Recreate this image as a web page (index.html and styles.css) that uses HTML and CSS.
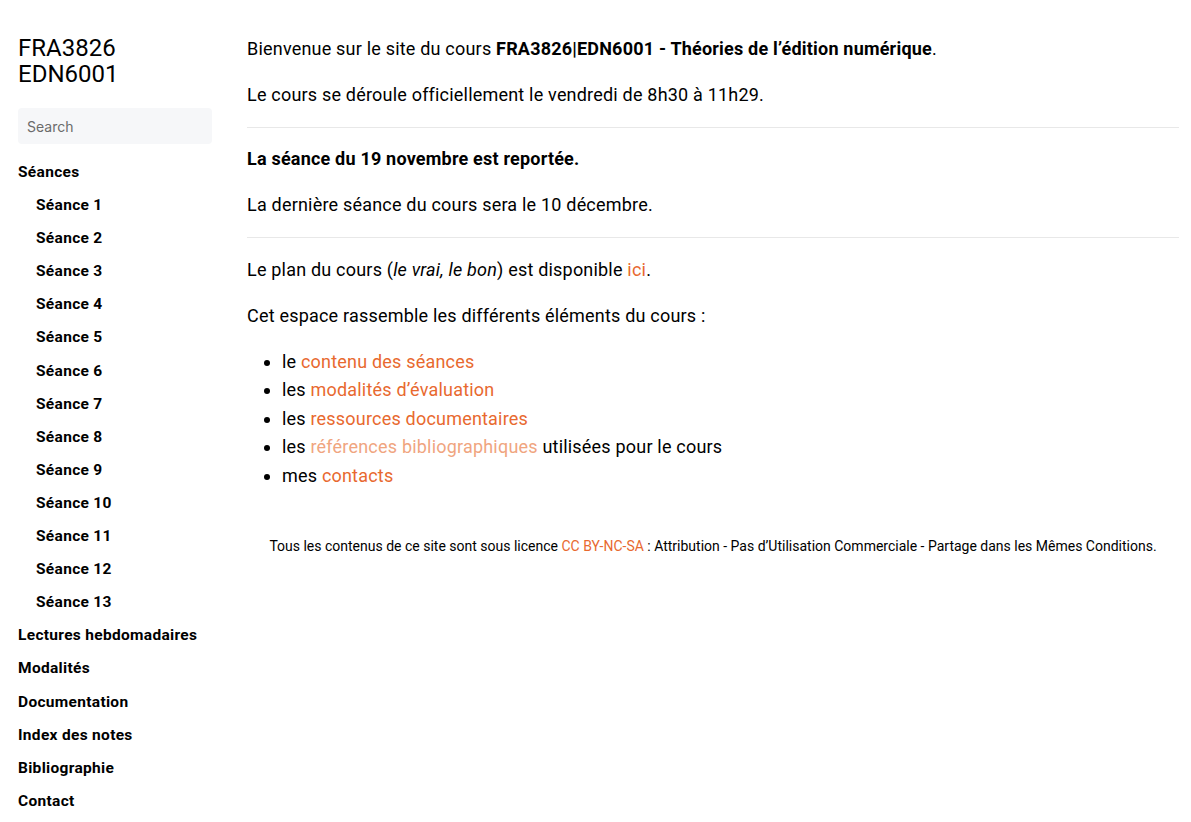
FILE: index.html
```html
<!DOCTYPE html>
<html lang="fr">
<head>
<meta charset="utf-8">
<title>FRA3826 EDN6001</title>
<link rel="stylesheet" href="styles.css">
</head>
<body>
<div class="layout">
  <aside class="sidebar">
    <h1 class="site-title">FRA3826<br>EDN6001</h1>
    <input class="search" type="text" placeholder="Search">
    <nav>
      <ul class="nav">
        <li><a href="#">Séances</a>
          <ul class="subnav">
            <li><a href="#">Séance 1</a></li>
            <li><a href="#">Séance 2</a></li>
            <li><a href="#">Séance 3</a></li>
            <li><a href="#">Séance 4</a></li>
            <li><a href="#">Séance 5</a></li>
            <li><a href="#">Séance 6</a></li>
            <li><a href="#">Séance 7</a></li>
            <li><a href="#">Séance 8</a></li>
            <li><a href="#">Séance 9</a></li>
            <li><a href="#">Séance 10</a></li>
            <li><a href="#">Séance 11</a></li>
            <li><a href="#">Séance 12</a></li>
            <li><a href="#">Séance 13</a></li>
          </ul>
        </li>
        <li><a href="#">Lectures hebdomadaires</a></li>
        <li><a href="#">Modalités</a></li>
        <li><a href="#">Documentation</a></li>
        <li><a href="#">Index des notes</a></li>
        <li><a href="#">Bibliographie</a></li>
        <li><a href="#">Contact</a></li>
      </ul>
    </nav>
  </aside>
  <main class="content">
    <p>Bienvenue sur le site du cours <strong>FRA3826|EDN6001 - Théories de l’édition numérique</strong>.</p>
    <p>Le cours se déroule officiellement le vendredi de 8h30 à 11h29.</p>
    <hr>
    <p><strong>La séance du 19 novembre est reportée.</strong></p>
    <p>La dernière séance du cours sera le 10 décembre.</p>
    <hr>
    <p>Le plan du cours (<em>le vrai, le bon</em>) est disponible <a class="link" href="#">ici</a>.</p>
    <p>Cet espace rassemble les différents éléments du cours :</p>
    <ul class="list">
      <li>le <a class="link" href="#">contenu des séances</a></li>
      <li>les <a class="link" href="#">modalités d’évaluation</a></li>
      <li>les <a class="link" href="#">ressources documentaires</a></li>
      <li>les <a class="link light" href="#">références bibliographiques</a> utilisées pour le cours</li>
      <li>mes <a class="link" href="#">contacts</a></li>
    </ul>
    <footer class="footer">Tous les contenus de ce site sont sous licence <a class="link" href="#">CC BY-NC-SA</a> : Attribution - Pas d’Utilisation Commerciale - Partage dans les Mêmes Conditions.</footer>
  </main>
</div>
</body>
</html>
```
FILE: styles.css
```css
html, body {
  margin: 0;
  padding: 0;
  background: #fff;
  color: #000;
  font-family: Roboto, "Liberation Sans", sans-serif;
}

.layout {
  display: flex;
  align-items: flex-start;
  gap: 35px;
  padding: 0 12px 0 18px;
}

.sidebar {
  width: 194px;
  flex-shrink: 0;
  padding-top: 35px;
}

.site-title {
  margin: 0 0 21px;
  font-size: 24px;
  font-weight: 400;
  line-height: 26px;
}

.search {
  display: block;
  box-sizing: border-box;
  width: 194px;
  height: 36px;
  border: none;
  border-radius: 4px;
  background: #f6f7f9;
  padding: 0 9px;
  font-family: Inter, Roboto, sans-serif;
  font-size: 14px;
  color: #222;
  outline: none;
  margin-bottom: 12px;
}

.search::placeholder {
  color: #6b6b6b;
}

.nav, .subnav {
  list-style: none;
  margin: 0;
  padding: 0;
}

.subnav {
  padding-left: 18px;
}

.nav a {
  display: block;
  color: #000;
  text-decoration: none;
  font-weight: 700;
  font-size: 15.5px;
  letter-spacing: 0.02em;
  line-height: 33.1px;
}

.content {
  flex: 1;
  min-width: 0;
  padding-top: 17px;
  font-size: 18px;
  letter-spacing: 0.2px;
  line-height: 28.5px;
}

.content p {
  margin: 17.5px 0;
}

.content hr {
  border: none;
  border-top: 1px solid #e8e8e8;
  margin: 17.5px 0;
}

.link {
  color: #e8692f;
  text-decoration: none;
}

.link.light {
  color: #f0a57f;
}

.list {
  margin: 17.5px 0;
  padding-left: 35px;
}

.footer {
  margin-top: 46px;
  text-align: center;
  font-size: 14px;
  letter-spacing: 0;
  line-height: 20px;
}
```
